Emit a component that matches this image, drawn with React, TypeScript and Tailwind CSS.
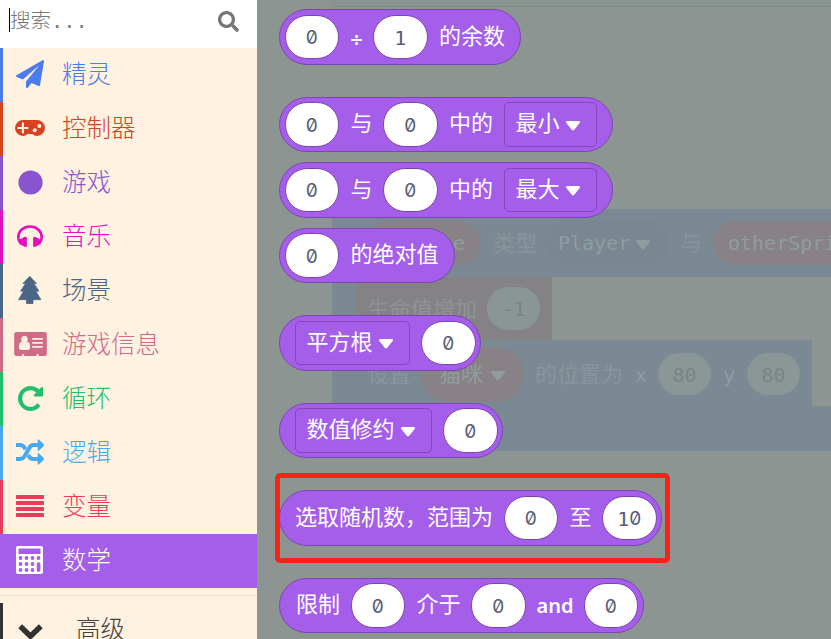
import React from "react";
import { FaCircle, FaSearch } from "react-icons/fa";

const cjk = "font-['DejaVu_Sans_Mono','Noto_Sans_CJK_SC',monospace]";

function PaperPlane() {
  return (
    <svg width="28" height="28" viewBox="0 0 1792 1792" fill="currentColor">
      <path d="M1764 11q33 24 27 64l-256 1536q-5 29-32 45-14 8-31 8-11 0-24-5l-453-185-242 295q-18 23-49 23-13 0-22-4-19-7-30.5-23.5t-11.5-36.500v-349l864-1059-1069 925-395-162q-37-14-40-55-2-40 32-59l1664-960q15-9 32-9 20 0 36 11z" />
    </svg>
  );
}

function Gamepad() {
  return (
    <svg width="30" height="16" viewBox="0 0 91 48">
      <path d="M24 0h43a24 24 0 0 1 0 48q-9 0-14-6H38q-5 6-14 6a24 24 0 0 1 0-48z" fill="currentColor" />
      <path d="M24 10v28M10 24h28" stroke="#fff2e1" strokeWidth="6.5" strokeLinecap="round" />
      <circle cx="60" cy="31" r="6" fill="#fff2e1" />
      <circle cx="74" cy="18" r="6" fill="#fff2e1" />
    </svg>
  );
}

function Headphones() {
  return (
    <svg width="26" height="22" viewBox="0 0 79 66" fill="currentColor">
      <path d="M8 50Q4 44 4 37C4 18 20 4 39.500 4S75 18 75 37q0 7-4 13" fill="none" stroke="currentColor" strokeWidth="8" />
      <path d="M3 47 22 36q8-3 8 4v26h-7L7 57z" />
      <path d="M76 47 57 36q-8-3-8 4v26h7l16-9z" />
    </svg>
  );
}

function Tree() {
  return (
    <svg width="23.500" height="28" viewBox="0 0 70 85" fill="currentColor" stroke="currentColor" strokeWidth="2" strokeLinejoin="round">
      <path d="M35 1 56 23H48L63 46H54L69 72H45V84H25V72H1L16 46H7L22 23H14z" />
    </svg>
  );
}

function IdCard() {
  return (
    <svg width="33" height="24" viewBox="0 0 98 72">
      <rect width="98" height="72" rx="7" fill="currentColor" />
      <g fill="#fff2e1">
        <ellipse cx="31" cy="22" rx="9.500" ry="11" />
        <path d="M22 29q9 8 18 0 8 2 8 17 0 8-6 8H20q-6 0-6-8 0-15 8-17z" />
        <rect x="54" y="18" width="32" height="5" rx="1" />
        <rect x="54" y="30" width="32" height="5" rx="1" />
        <rect x="54" y="42" width="32" height="5" rx="1" />
        <rect x="24" y="66" width="6" height="6" />
        <rect x="67" y="66" width="6" height="6" />
      </g>
    </svg>
  );
}

function Loop() {
  return (
    <svg width="25" height="25" viewBox="128 128 1536 1536" fill="currentColor">
      <path d="M1664 256v448q0 26-19 45t-45 19h-448q-42 0-59-40-17-39 14-69l138-138q-148-137-349-137-104 0-198.500 40.500t-163.500 109.500-109.500 163.500-40.500 198.500 40.500 198.500 109.500 163.500 163.500 109.500 198.500 40.500q119 0 225-52t179-147q7-10 23-12 15 0 25 9l137 138q9 8 9.500 20.500t-7.500 22.500q-109 132-264 204.500t-327 72.500q-156 0-298-61t-245-164-164-245-61-298 61-298 164-245 245-164 298-61q147 0 284.500 55.500t244.500 156.500l130-129q29-31 70-14 39 17 39 59z" />
    </svg>
  );
}

function Shuffle() {
  return (
    <svg width="28" height="26" viewBox="0 0 85 78">
      <g fill="none" stroke="currentColor" strokeWidth="12">
        <path d="M0 18h13q8 0 13 8l3 5" />
        <path d="M37 48l3 5q4 7 12 7h17" />
        <path d="M0 60h13q8 0 13-8L41 26q4-8 12-8h16" />
      </g>
      <path d="M66 2q0-3 3-1l15 14q2 3 0 6L69 35q-3 2-3-1zM66 44q0-3 3-1l15 14q2 3 0 6L69 77q-3 2-3-1z" fill="currentColor" />
    </svg>
  );
}

function Bars() {
  return (
    <svg width="28" height="22" viewBox="0 0 28 22" fill="currentColor">
      <rect y="0" width="28" height="4" rx="0.8" />
      <rect y="6" width="28" height="4" rx="0.8" />
      <rect y="12" width="28" height="4" rx="0.8" />
      <rect y="18" width="28" height="4" rx="0.8" />
    </svg>
  );
}

function Calculator() {
  const dots = [
    [4.5, 12], [10.5, 12], [16.5, 12], [22.5, 12],
    [4.5, 18], [10.5, 18], [16.5, 18],
    [4.5, 24], [10.5, 24], [16.5, 24],
  ];
  return (
    <svg width="27" height="28" viewBox="0 0 27 28">
      <rect width="27" height="28" rx="2" fill="#fff" />
      <rect x="2.5" y="2.5" width="22" height="5.5" rx="0.5" fill="#a55eea" />
      {dots.map(([x, y]) => (
        <circle key={`${x}-${y}`} cx={x} cy={y} r="1.9" fill="#a55eea" />
      ))}
      <rect x="20.7" y="16.2" width="3.7" height="9.7" rx="1.85" fill="#a55eea" />
    </svg>
  );
}

function Chevron() {
  return (
    <svg width="25" height="17" viewBox="0 0 25 17">
      <path d="M2.200 3.200 12.500 13.200 22.800 3.200" fill="none" stroke="currentColor" strokeWidth="5.500" />
    </svg>
  );
}

const categories = [
  { name: "精灵", icon: <PaperPlane />, bar: "border-[#4b7bec]", text: "text-[#4b7bec]" },
  { name: "控制器", icon: <Gamepad />, bar: "border-[#d54322]", text: "text-[#d54322]" },
  { name: "游戏", icon: <FaCircle size={25} />, bar: "border-[#8854d0]", text: "text-[#8854d0]" },
  { name: "音乐", icon: <Headphones />, bar: "border-[#e30fc0]", text: "text-[#e30fc0]" },
  { name: "场景", icon: <Tree />, bar: "border-[#4b6584]", text: "text-[#4b6584]" },
  { name: "游戏信息", icon: <IdCard />, bar: "border-[#cf6a87]", text: "text-[#cf6a87]" },
  { name: "循环", icon: <Loop />, bar: "border-[#20bf6b]", text: "text-[#20bf6b]" },
  { name: "逻辑", icon: <Shuffle />, bar: "border-[#45aaf2]", text: "text-[#45aaf2]" },
  { name: "变量", icon: <Bars />, bar: "border-[#eb3b5a]", text: "text-[#eb3b5a]" },
];

function Sidebar() {
  return (
    <aside className="flex h-full w-[257px] shrink-0 flex-col overflow-hidden bg-[#fff2e1] font-['Noto_Sans_CJK_SC',sans-serif] font-light">
      <div className="flex h-12 shrink-0 items-center bg-white pl-[9px] pr-[18px]">
        <span className="mb-[8px] h-6 w-px bg-black" />
        <span className="mb-[6px] flex-1 text-[20.5px] leading-6 text-[#767676]">
          搜索<span className="font-['Liberation_Mono',monospace]">...</span>
        </span>
        <FaSearch size={21} className="mb-[6px] text-[#767676]" />
      </div>
      {categories.map((c) => (
        <div key={c.name} className={`flex h-[54px] shrink-0 items-center border-l-[3px] pb-[2px] ${c.bar} ${c.text}`}>
          <span className="flex w-[54px] justify-center">{c.icon}</span>
          <span className="ml-[5px] pb-[2px] text-[24.5px] leading-none">{c.name}</span>
        </div>
      ))}
      <div className="flex h-[54px] shrink-0 items-center bg-[#a55eea] pb-[2px] pl-[3px] text-white">
        <span className="flex w-[54px] justify-center pr-[1px]"><Calculator /></span>
        <span className="ml-[5px] pb-[2px] text-[24.5px] leading-none">数学</span>
      </div>
      <div className="mb-[7px] h-2 shrink-0 border-b border-[#e8dfd6]" />
      <div className="flex h-[54px] shrink-0 items-center border-l-[3px] border-[#333] pb-[2px] text-[#443e3a]">
        <span className="flex w-[54px] justify-center pt-[4px] text-[#333]"><Chevron /></span>
        <span className="ml-[19px] pb-[2px] text-[24.5px] leading-none">高级</span>
      </div>
    </aside>
  );
}

function Num({ children }: { children: string }) {
  return (
    <span className="flex h-[44.5px] w-[54.5px] shrink-0 items-center justify-center rounded-[22px] border border-[#7d45b3] bg-white pt-[2px] text-[20px] text-[#575e75]">
      {children.split("").map((d, i) =>
        d === "0" ? (
          <span key={i} className="flex w-3 justify-center font-['Inter',sans-serif] text-[19px] slashed-zero">0</span>
        ) : (
          <span key={i} className="w-3 text-center">{d}</span>
        ),
      )}
    </span>
  );
}

function Label({ children }: { children: string }) {
  return <span className="ml-[11.5px] mr-[10.5px] shrink-0 whitespace-nowrap text-[22px]">{children}</span>;
}

function And() {
  return (
    <span className="ml-[11.5px] mr-[10.5px] flex w-9 shrink-0 justify-center pt-[2px] font-['Noto_Sans',sans-serif] text-[20px] font-semibold">
      and
    </span>
  );
}

function Divide() {
  return (
    <span className="ml-[11.5px] mr-[10.5px] flex w-3 shrink-0 justify-center pt-[2px] font-['Noto_Sans',sans-serif] text-[22px] font-semibold">
      ÷
    </span>
  );
}

function Arrow() {
  return (
    <svg width="14" height="10" viewBox="0 0 14 10" fill="currentColor" className="mt-[3px]">
      <path d="M1.2 0h11.6c1.2 0 1.6 1.2.8 2L8.3 8.7c-.7.8-1.900.8-2.600 0L.4 2C-.4 1.2 0 0 1.2 0z" />
    </svg>
  );
}

function Drop({ children }: { children: string }) {
  return (
    <span className="flex h-[44.5px] shrink-0 items-center gap-1.5 rounded-[5px] border border-[#8445bd] pl-[11px] pr-[16.5px] text-[22px]">
      {children}
      <Arrow />
    </span>
  );
}

function Block({ children, lead = "pl-[5px]", end = "pr-[4.5px]" }: { children: React.ReactNode; lead?: string; end?: string }) {
  return (
    <div className={`flex h-[55.5px] w-max items-center rounded-full border border-[#7d45b3] bg-[#a55eea] leading-none text-white ${lead} ${end}`}>
      {children}
    </div>
  );
}

function Flyout() {
  return (
    <div className={`relative flex flex-col items-start gap-8 pl-[21.5px] pt-[9px] ${cjk}`}>
      <Block>
        <Num>0</Num><Divide /><Num>1</Num><Label>的余数</Label>
      </Block>
      <div className="flex flex-col items-start gap-2.5">
        <Block end="pr-[14.5px]">
          <Num>0</Num><Label>与</Label><Num>0</Num><Label>中的</Label><Drop>最小</Drop>
        </Block>
        <Block end="pr-[14.5px]">
          <Num>0</Num><Label>与</Label><Num>0</Num><Label>中的</Label><Drop>最大</Drop>
        </Block>
        <Block>
          <Num>0</Num><Label>的绝对值</Label>
        </Block>
      </div>
      <Block lead="pl-[15px]">
        <Drop>平方根</Drop><span className="w-[11px]" /><Num>0</Num>
      </Block>
      <Block lead="pl-[15px]">
        <Drop>数值修约</Drop><span className="w-[11px]" /><Num>0</Num>
      </Block>
      <div className="relative">
        <Block lead="pl-[4px]">
          <Label>选取随机数，范围为</Label><Num>0</Num><Label>至</Label><Num>10</Num>
        </Block>
        <div className="absolute -left-[4px] -top-[17px] h-[90px] w-[395px] rounded-[5px] border-[5px] border-[#fb2218]" />
      </div>
      <Block>
        <Label>限制</Label><Num>0</Num><Label>介于</Label><Num>0</Num><And /><Num>0</Num>
      </Block>
    </div>
  );
}

/* Program blocks on the free canvas, dimmed while the flyout is open. */
function Canvas() {
  return (
    <div className={`absolute inset-0 overflow-hidden leading-none text-[#909d9f] ${cjk}`}>
      <div className="absolute left-[75px] top-0 h-[7px] w-[499px] rounded-bl border-b border-[#7f8a90] bg-[#89938f]" />
      <div className="absolute left-[75px] top-[209px] h-[242px] w-[499px] bg-[#7a8993]" />
      <div className="absolute left-[295px] top-[277px] h-[63px] w-[279px] bg-[#8d9592]" />
      <div className="absolute left-[555px] top-[340px] h-[66px] w-[19px] bg-[#8d9592]" />
      <div className="absolute left-[98px] top-[277px] h-[63px] w-[197px] rounded-r bg-[#858286]" />
      <div className="absolute left-[110px] top-[221px] flex h-[44px] w-[113px] items-center justify-end rounded-full bg-[#888186] pr-[15px] text-[20px]">e</div>
      <span className="absolute left-[236px] top-[233px] text-[22px] text-[#88969b]">类型</span>
      <div className="absolute left-[288px] top-[221px] flex h-[44px] w-[123px] items-center gap-1.5 rounded-full bg-[#788791] pl-[13px] text-[20px]">
        Player<Arrow />
      </div>
      <span className="absolute left-[423px] top-[233px] text-[22px] text-[#88969b]">与</span>
      <div className="absolute left-[456px] top-[221px] flex h-[44px] w-[170px] items-center rounded-full bg-[#888186] pl-[15px] text-[20px]">otherSprite</div>
      <span className="absolute left-[110px] top-[299px] text-[22px] text-[#8e9396]">生命值增加</span>
      <div className="absolute left-[230px] top-[287px] flex h-[43px] w-[53px] items-center justify-center rounded-[21px] bg-[#8a9596] text-[20px] text-[#788487]">-1</div>
      <span className="absolute left-[110px] top-[364px] text-[22px] text-[#88969b]">设置</span>
      <div className="absolute left-[164px] top-[347px] flex h-[55px] w-[103px] items-center gap-2 rounded-full bg-[#888186] pl-[18px] text-[22px]">
        猫咪<Arrow />
      </div>
      <span className="absolute left-[278px] top-[364px] text-[22px] text-[#88969b]">的位置为</span>
      <span className="absolute left-[378px] top-[365px] text-[20px]">x</span>
      <div className="absolute left-[401px] top-[353px] flex h-[42px] w-[53px] items-center justify-center rounded-[21px] bg-[#8a9796] pt-[2px] text-[20px] text-[#788487]">80</div>
      <span className="absolute left-[466px] top-[365px] text-[20px]">y</span>
      <div className="absolute left-[490px] top-[353px] flex h-[42px] w-[53px] items-center justify-center rounded-[21px] bg-[#8a9796] pt-[2px] text-[20px] text-[#788487]">80</div>
    </div>
  );
}

export default function App() {
  return (
    <div className="flex h-[639px] w-[831px] overflow-hidden bg-[#8c9592]">
      <Sidebar />
      <main className="relative min-w-0 flex-1 bg-[#8c9592]">
        <Canvas />
        <Flyout />
      </main>
    </div>
  );
}
